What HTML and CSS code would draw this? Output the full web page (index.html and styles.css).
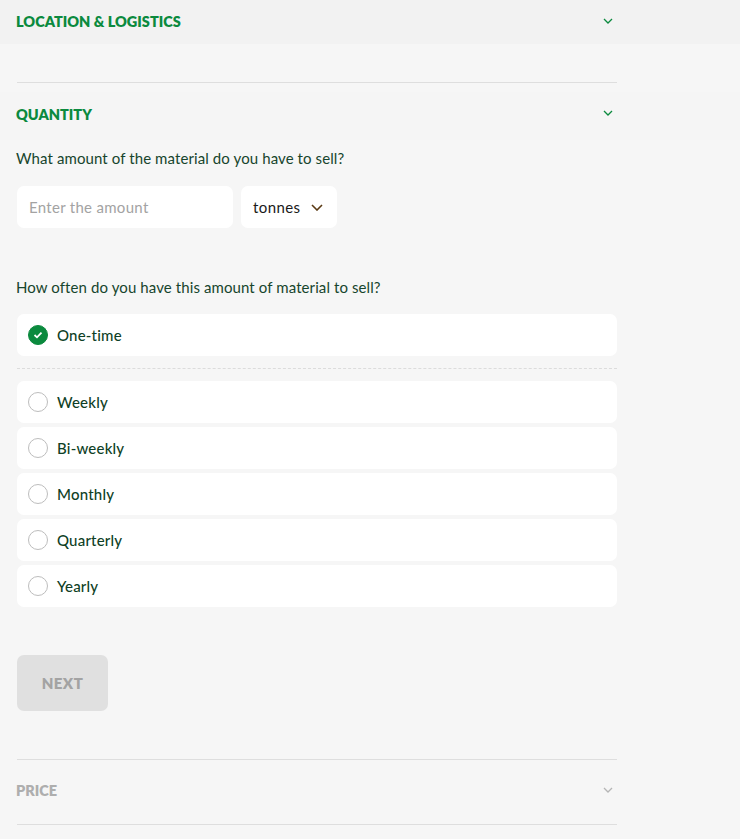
FILE: index.html
```html
<!DOCTYPE html>
<html>
<head>
<meta charset="utf-8">
<link rel="stylesheet" href="styles.css">
</head>
<body>
<div class="band band-top">
  <div class="section-head">
    <span class="head-title green">LOCATION &amp; LOGISTICS</span>
    <svg class="chev" width="10" height="6" viewBox="0 0 10 6"><path d="M1 1 L5 5 L9 1" fill="none" stroke="#0b8a3e" stroke-width="1.3"/></svg>
  </div>
</div>
<div class="wrap">
  <div class="rule rule-first"></div>
</div>
<div class="band band-q">
  <div class="section-head head-q">
    <span class="head-title green">QUANTITY</span>
    <svg class="chev" width="10" height="6" viewBox="0 0 10 6"><path d="M1 1 L5 5 L9 1" fill="none" stroke="#0b8a3e" stroke-width="1.3"/></svg>
  </div>
</div>
<div class="wrap">
  <p class="question q1">What amount of the material do you have to sell?</p>
  <div class="amount-row">
    <div class="field amount"><span class="placeholder">Enter the amount</span></div>
    <div class="field unit"><span class="unit-text">tonnes</span>
      <svg width="12" height="7" viewBox="0 0 12 7"><path d="M1 1 L6 6 L11 1" fill="none" stroke="#5a3a14" stroke-width="1.6"/></svg>
    </div>
  </div>
  <p class="question q2">How often do you have this amount of material to sell?</p>
  <div class="option selected">
    <span class="radio checked"><svg width="10" height="8" viewBox="0 0 10 8"><path d="M1.5 4 L4 6.3 L8.5 1.7" fill="none" stroke="#fff" stroke-width="1.8"/></svg></span>
    <span class="opt-label">One-time</span>
  </div>
  <div class="dashed"></div>
  <div class="options">
    <div class="option"><span class="radio"></span><span class="opt-label">Weekly</span></div>
    <div class="option"><span class="radio"></span><span class="opt-label">Bi-weekly</span></div>
    <div class="option"><span class="radio"></span><span class="opt-label">Monthly</span></div>
    <div class="option"><span class="radio"></span><span class="opt-label">Quarterly</span></div>
    <div class="option"><span class="radio"></span><span class="opt-label">Yearly</span></div>
  </div>
  <button class="next">NEXT</button>
  <div class="rule rule-price"></div>
  <div class="section-head head-price">
    <span class="head-title grey">PRICE</span>
    <svg class="chev" width="10" height="6" viewBox="0 0 10 6"><path d="M1 1 L5 5 L9 1" fill="none" stroke="#b5b5b5" stroke-width="1.3"/></svg>
  </div>
  <div class="rule"></div>
</div>
</body>
</html>
```
FILE: styles.css
```css
* { box-sizing: border-box; }
html, body { margin: 0; padding: 0; }
body {
  background: #f6f6f6;
  font-family: Lato, "Liberation Sans", sans-serif;
  width: 740px;
  height: 839px;
  overflow: hidden;
}
.band { width: 740px; }
.band-top { background: #f2f2f2; height: 44px; }
.band-q { background: #f5f5f5; height: 48px; }
.wrap { width: 601px; margin-left: 16px; }
.section-head {
  width: 617px;
  height: 43px;
  display: flex;
  align-items: center;
  justify-content: space-between;
  padding-left: 16px;
  padding-right: 4px;
}
.head-q { height: 44px; }
.chev { margin-top: -2px; }
.head-title {
  font-weight: 800;
  font-size: 14.5px;
  letter-spacing: 0;
}
.green { color: #0b8a3e; }
.grey { color: #aeaeae; }
.rule { height: 1px; background: #dedede; margin-left: 1px; width: 600px; }
.rule-first { margin-top: 38px; margin-bottom: 9px; }
.question {
  margin: 0;
  color: #17452d;
  font-size: 15px;
  line-height: 20px;
  letter-spacing: 0.1px;
}
.q1 { margin-top: 8px; }
.amount-row { display: flex; gap: 8px; margin-top: 18px; margin-left: 1px; }
.field {
  background: #fff;
  height: 42px;
  border-radius: 7px;
  display: flex;
  align-items: center;
}
.amount { width: 216px; padding-left: 12px; }
.placeholder { color: #a3a3a3; font-size: 15px; letter-spacing: 0.3px; }
.unit { width: 96px; padding-left: 12px; gap: 11px; }
.unit-text { color: #1a1a1a; font-size: 15px; letter-spacing: 0.4px; }
.q2 { margin-top: 49px; }
.option {
  background: #fff;
  height: 42px;
  border-radius: 7px;
  display: flex;
  align-items: center;
  padding-left: 11px;
  padding-bottom: 1px;
  margin-left: 1px;
  width: 600px;
}
.selected { margin-top: 17px; }
.dashed {
  margin-top: 12px;
  margin-left: 1px;
  width: 600px;
  border-top: 1px dashed #dcdcdc;
}
.options { display: flex; flex-direction: column; gap: 4px; margin-top: 12px; }
.radio {
  width: 20px; height: 20px;
  border-radius: 50%;
  border: 1.5px solid #bdbdbd;
  display: flex; align-items: center; justify-content: center;
  flex: none;
}
.radio.checked { background: #0b8a3e; border-color: #0b8a3e; }
.opt-label {
  margin-left: 9px;
  color: #0f3f26;
  font-size: 15px;
  font-weight: 500;
  letter-spacing: 0.2px;
}
.next {
  display: block;
  margin-top: 48px;
  margin-left: 1px;
  width: 91px;
  height: 56px;
  padding-bottom: 2px;
  border: none;
  border-radius: 7px;
  background: #e0e0e0;
  color: #a3a3a3;
  font-family: Lato, "Liberation Sans", sans-serif;
  font-weight: 800;
  font-size: 15px;
  letter-spacing: 0.5px;
}
.rule-price { margin-top: 48px; }
.head-price { width: 601px; height: 64px; padding-left: 0; padding-bottom: 3px; }
```
